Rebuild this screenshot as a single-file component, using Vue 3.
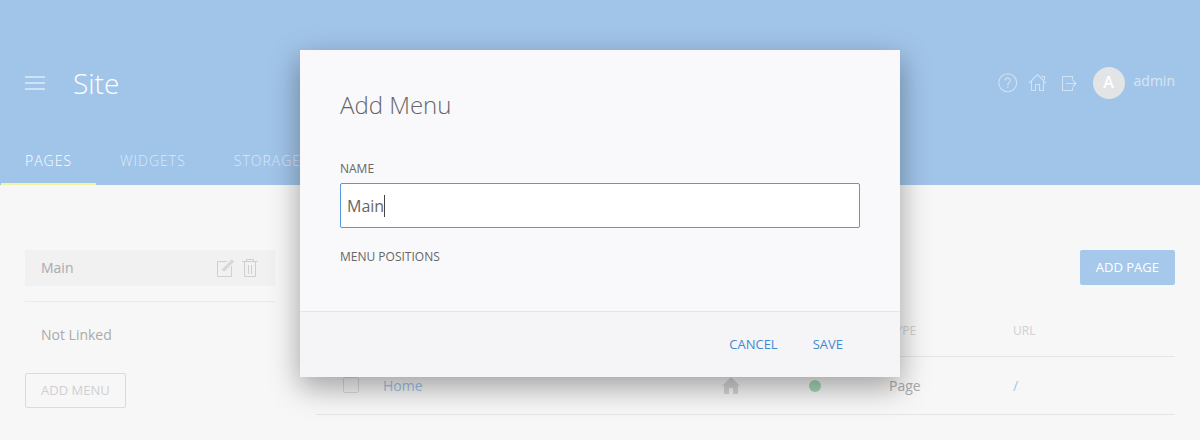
<script setup>
import { ref } from 'vue'

const tabs = ['Pages', 'Widgets', 'Storage']
const menuName = ref('Main')
</script>

<template>
  <div class="page">
    <header class="header">
      <div class="topbar">
        <div class="burger"><i></i><i></i><i></i></div>
        <h1 class="title">Site</h1>
        <div class="user">
          <svg class="ico" width="20" height="20" viewBox="0 0 20 20">
            <circle cx="9.700" cy="9.700" r="9" />
            <path d="M7.200 7.600c0-1.600 1-2.600 2.500-2.600s2.600 1 2.600 2.400c0 2-2.500 2.200-2.500 4.300v.6M9.800 13.600v1.400" />
          </svg>
          <svg class="ico" width="20" height="20" viewBox="0 0 20 20">
            <path d="M1.200 10L9.500 1.500l8.300 8.500M3.500 8.500v9h4v-6h4v6h4v-9M13.500 3.500h3v3.500" />
          </svg>
          <svg class="ico" width="20" height="20" viewBox="0 0 20 20">
            <path d="M14.500 6.500v-3h-10v14h10v-3M8 10.500h10M14.800 7.200l3.300 3.300-3.300 3.300" />
          </svg>
          <span class="avatar">A</span>
          <span class="username">admin</span>
        </div>
      </div>
      <nav class="tabs">
        <a v-for="(tab, i) in tabs" :key="tab" class="tab" :class="{ active: i === 0 }">{{ tab }}</a>
      </nav>
    </header>

    <main class="content">
      <aside class="sidebar">
        <div class="menu-item current">
          <span>Main</span>
          <svg class="tool" width="18" height="20" viewBox="0 0 18 20">
            <path d="M11 3.500H1.500v15h14V8" />
            <path class="pen-edge" d="M7 12.500L17 2.500" />
            <path class="pen" d="M7.300 12.200L16.700 2.800" />
          </svg>
          <svg class="tool" width="16" height="20" viewBox="0 0 16 20">
            <path d="M0 3.500h16M4.500 3.500v-2h7v2M2.500 3.500v15h11v-15M6.500 7v9M9.500 7v9" />
          </svg>
        </div>
        <hr class="divider" />
        <div class="menu-item unlinked">Not Linked</div>
        <button class="btn outline">Add Menu</button>
      </aside>

      <section class="listing">
        <div class="actions"><button class="btn primary">Add Page</button></div>
        <div class="row head">
          <span></span><span></span><span></span><span></span>
          <span>Type</span><span>URL</span>
        </div>
        <div class="row">
          <span class="check"></span>
          <a class="link">Home</a>
          <svg class="home" width="18" height="17" viewBox="0 0 18 17">
            <path d="M9 0L0 9h2v8h5v-6h4v6h5V9h2z" />
          </svg>
          <span class="dot"></span>
          <span>Page</span>
          <a class="link">/</a>
        </div>
      </section>
    </main>

    <div class="overlay">
      <div class="modal">
        <div class="modal-body">
          <h2 class="modal-title">Add Menu</h2>
          <div class="label">Name</div>
          <div class="field"><span>{{ menuName }}</span><i class="caret"></i></div>
          <div class="label positions">Menu Positions</div>
        </div>
        <footer class="modal-footer">
          <a>Cancel</a>
          <a>Save</a>
        </footer>
      </div>
    </div>
  </div>
</template>

<style>
body {
  margin: 0;
  overflow: hidden;
}
</style>

<style scoped>
* {
  box-sizing: border-box;
}
.page {
  position: relative;
  width: 1200px;
  height: 440px;
  overflow: hidden;
  background: #f7f7f7;
  font-family: 'Open Sans', 'Noto Sans', sans-serif;
  font-size: 14px;
  line-height: 20px;
  color: #aaa;
}
.header {
  height: 185px;
  display: flex;
  flex-direction: column;
  justify-content: space-between;
  background: #a1c4e9;
}
.topbar {
  display: flex;
  align-items: center;
  margin-top: 63px;
  height: 40px;
  padding: 0 25px;
}
.burger {
  width: 20px;
  height: 14px;
  display: flex;
  flex-direction: column;
  justify-content: space-between;
}
.burger i {
  height: 2px;
  background: #cfe1f4;
}
.title {
  margin: 0 0 0 28px;
  font-size: 28px;
  line-height: 40px;
  font-weight: 300;
  color: #fff;
}
.user {
  margin-left: auto;
  display: flex;
  align-items: center;
}
.ico {
  margin-right: 10px;
  fill: none;
  stroke: #d0e2f4;
  stroke-width: 1.1;
}
.avatar {
  width: 32px;
  height: 32px;
  margin-left: 5px;
  border-radius: 50%;
  background: #e2e4e6;
  color: #fff;
  font-size: 16px;
  line-height: 31px;
  font-weight: 600;
  text-align: center;
}
.username {
  margin: -4px 0 0 9px;
  color: #d7e6f6;
}
.tabs {
  display: flex;
  padding-left: 1px;
}
.tab {
  height: 35px;
  padding: 0 24px;
  letter-spacing: 1px;
  line-height: 21px;
  font-weight: 300;
  text-transform: uppercase;
  color: #dbe9f8;
  border-bottom: 2px solid transparent;
}
.tab.active {
  color: #fff;
  border-color: #f3f3a3;
}
.content {
  display: flex;
  padding: 65px 25px 0;
}
.sidebar {
  width: 250px;
}
.menu-item {
  display: flex;
  align-items: center;
  height: 36px;
  padding: 0 17px 0 16px;
}
.current {
  background: #f1f1f1;
}
.current span {
  flex: 1;
}
.tool {
  margin-left: 8px;
  fill: none;
  stroke: #cfcfcf;
}
.pen-edge {
  stroke: #cfcfcf;
  stroke-width: 3;
}
.pen {
  stroke: #dedede;
  stroke-width: 1.2;
}
.divider {
  height: 1px;
  margin: 15px 0;
  border: 0;
  background: #ebebeb;
}
.btn {
  height: 35px;
  padding: 0 15px;
  border: 1px solid transparent;
  border-radius: 2px;
  font: 13px/33px 'Open Sans', 'Noto Sans', sans-serif;
  text-transform: uppercase;
}
.outline {
  display: block;
  margin-top: 20px;
  border-color: #dbdbdb;
  background: transparent;
  color: #d0d0d0;
}
.primary {
  background: #a6c8eb;
  color: #fff;
}
.listing {
  width: 859px;
  margin-left: 41px;
}
.actions {
  display: flex;
  justify-content: flex-end;
  margin-bottom: 20px;
}
.row {
  display: grid;
  grid-template-columns: 67px 331px 84px 91px 124px 1fr;
  align-items: center;
  height: 58px;
  border-bottom: 1px solid #e5e5e5;
}
.row.head {
  height: 52px;
  font-size: 12px;
  color: #d0d0d0;
  text-transform: uppercase;
}
.row > svg {
  margin-left: 8px;
}
.check {
  width: 16px;
  height: 16px;
  margin: -2px 0 0 27px;
  border: 1px solid #dbdbdb;
  border-radius: 2px;
}
.link {
  color: #a1c4e9;
}
.home {
  fill: #d6d6d6;
}
.dot {
  width: 12px;
  height: 12px;
  margin: 1px 0 0 11px;
  border-radius: 50%;
  background: #a5d6b4;
}
.overlay {
  position: absolute;
  inset: 0;
  padding-top: 50px;
}
.modal {
  width: 600px;
  height: 327px;
  margin: 0 auto;
  display: flex;
  flex-direction: column;
  background: #f9f9fb;
  box-shadow: 0 10px 28px rgba(0, 0, 0, 0.36);
  color: #666;
}
.modal-body {
  flex: 1;
  padding: 40px 40px 0;
}
.modal-title {
  margin: 0 0 39px;
  font-size: 24px;
  line-height: 30px;
  font-weight: 300;
}
.label {
  font-size: 12px;
  line-height: 20px;
  text-transform: uppercase;
}
.field {
  display: flex;
  align-items: center;
  height: 45px;
  margin: 4px 0 19px;
  padding: 0 6px;
  border: 1px solid #5598dc;
  border-radius: 2px;
  background: #fff;
  font-size: 16px;
}
.caret {
  width: 1px;
  height: 22px;
  background: #444;
}
.modal-footer {
  display: flex;
  justify-content: flex-end;
  gap: 35px;
  height: 66px;
  padding: 0 57px 0 0;
  border-top: 1px solid #e5e5e7;
  background: #f5f5f8;
  color: #3f8bd0;
  font-size: 13px;
  line-height: 65px;
  text-transform: uppercase;
}
</style>
